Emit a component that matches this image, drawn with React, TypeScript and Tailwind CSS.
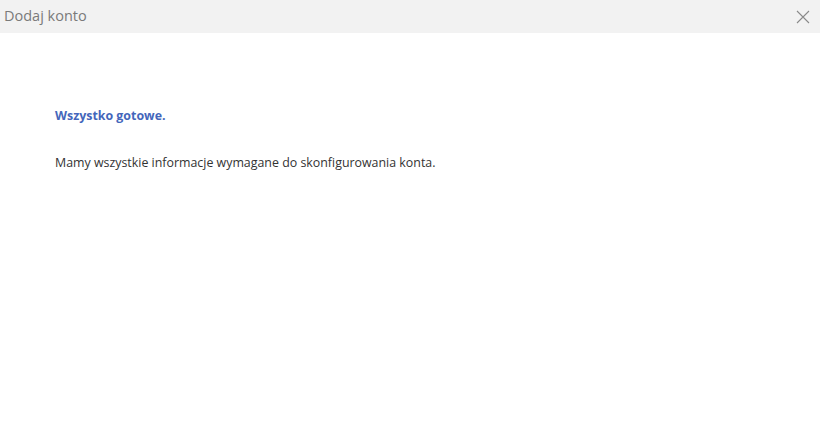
export default function App() {
  return (
    <div className="w-[820px] h-[432px] bg-white flex flex-col" style={{ fontFamily: '"Open Sans", "Noto Sans", sans-serif' }}>
      <div className="h-[33px] bg-[#f2f2f2] flex items-center justify-between pl-[4px] pr-[9px]">
        <span className="text-[14.5px] text-[#7a7a7a] leading-none">Dodaj konto</span>
        <svg width="16" height="16" viewBox="0 0 16 16" className="text-[#8a8a8a]">
          <path d="M2 2 L14 14 M14 2 L2 14" stroke="currentColor" strokeWidth="1.1" fill="none" />
        </svg>
      </div>
      <div className="flex flex-col pl-[55px] pt-[74px]">
        <h1 className="text-[12.4px] font-bold text-[#4466bb] leading-[17px]">Wszystko gotowe.</h1>
        <p className="mt-[30px] text-[12.4px] text-[#333333] leading-[17px]">
          Mamy wszystkie informacje wymagane do skonfigurowania konta.
        </p>
      </div>
    </div>
  );
}
